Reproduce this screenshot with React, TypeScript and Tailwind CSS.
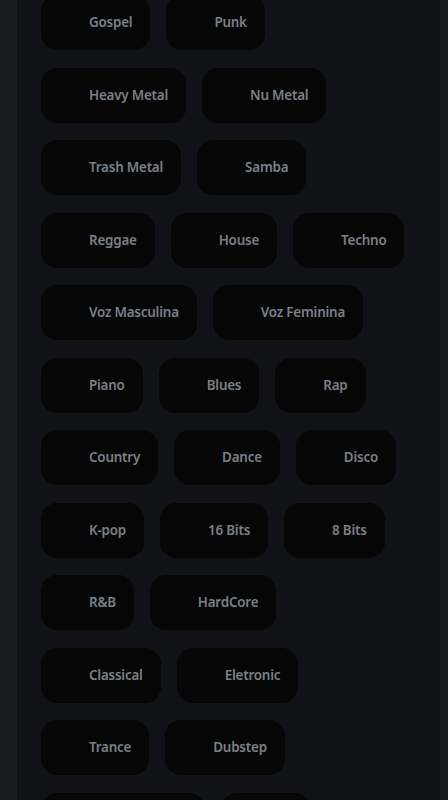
import React from "react";

const rows: string[][] = [
  ["Gospel", "Punk"],
  ["Heavy Metal", "Nu Metal"],
  ["Trash Metal", "Samba"],
  ["Reggae", "House", "Techno"],
  ["Voz Masculina", "Voz Feminina"],
  ["Piano", "Blues", "Rap"],
  ["Country", "Dance", "Disco"],
  ["K-pop", "16 Bits", "8 Bits"],
  ["R&B", "HardCore"],
  ["Classical", "Eletronic"],
  ["Trance", "Dubstep"],
  ["Música Clássica", "Axé"],
];

export default function App() {
  return (
    <div className="flex h-[800px] w-[448px] overflow-hidden bg-[#1b1c21]">
      <div className="w-[17px] shrink-0" />
      <div className="flex-1 bg-[#111217] pl-[24px] pr-4">
        <div className="-mt-[5px] flex flex-col gap-y-[17.5px]">
          {rows.map((row, i) => (
            <div key={i} className="flex gap-x-[16px]">
              {row.map((g) => (
                <button
                  key={g}
                  className="flex h-[55px] items-center rounded-[16px] bg-[#060607] pl-[48px] pr-[18px] text-[13.4px] font-semibold tracking-[-0.2px] text-[#7b8088]"
                  style={{ fontFamily: '"Noto Sans", sans-serif' }}
                >
                  {g}
                </button>
              ))}
            </div>
          ))}
        </div>
      </div>
      <div className="w-[8px] shrink-0" />
    </div>
  );
}
